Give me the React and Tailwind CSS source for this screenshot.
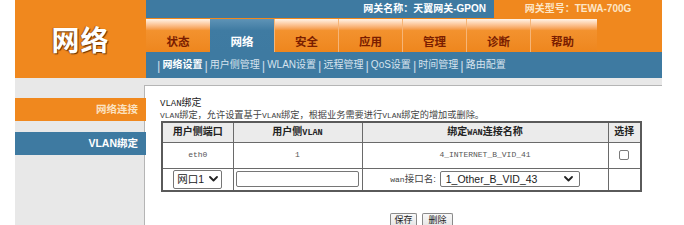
import React from "react";

const SANS = "font-['Liberation_Sans','Noto_Sans_CJK_SC',sans-serif]";
const MONO = "font-['Liberation_Mono','Noto_Sans_CJK_SC',monospace]";

const tabs = ["状态", "网络", "安全", "应用", "管理", "诊断", "帮助"];
const subs = ["网络设置", "用户侧管理", "WLAN设置", "远程管理", "QoS设置", "时间管理", "路由配置"];

function Chevron({ className = "" }) {
  return (
    <svg width="9" height="6" viewBox="0 0 9 6" className={className}>
      <path d="M1 1 L4.5 4.5 L8 1" fill="none" stroke="#222" strokeWidth="1.8" strokeLinecap="round" strokeLinejoin="round" />
    </svg>
  );
}

export default function App() {
  return (
    <div className={`w-[684px] h-[225px] overflow-hidden bg-white ${SANS}`}>
      <div className="ml-[15px] w-[647px]">
        {/* Header */}
        <div className="flex h-[78px]">
          <div className="w-[131px] bg-[#f0881e] flex items-center justify-center pt-[6px]">
            <span className="text-[28px] font-bold text-white leading-none tracking-[1px] [text-shadow:1px_1px_1px_#6b3300,-1px_0_1px_#a45a10]">
              网络
            </span>
          </div>
          <div className="w-[516px] flex flex-col">
            <div className="flex h-[18px]">
              <div className="w-[348px] bg-[#3e7aa1] flex items-center justify-end pr-[8px]">
                <span className="text-[10px] font-bold text-white leading-none">网关名称：天翼网关-GPON</span>
              </div>
              <div className="flex-1 bg-[#f0881e] flex items-center justify-center">
                <span className="text-[10px] font-bold text-[#fde6c6] leading-none">网关型号：TEWA-700G</span>
              </div>
            </div>
            <div className="flex h-[34px] bg-[#f0881e]">
              <div className="flex w-[448px] pt-[1px] bg-[#f0881e]">
                {tabs.map((t, i) =>
                  i === 1 ? (
                    <div
                      key={t}
                      className="w-[64px] bg-linear-to-b from-[#5e93b6] via-[#3f7ba2] via-[35%] to-[#3e7aa1] flex items-center justify-center pt-[14px]"
                    >
                      <span className="text-[11.5px] font-bold text-white leading-none">{t}</span>
                    </div>
                  ) : (
                    <div
                      key={t}
                      className="w-[64px] bg-linear-to-b from-[#fff4e8] via-[#f3922e] via-[35%] to-[#ee861d] flex items-center justify-center pt-[14px] border-l border-[#f6b577] first:border-l-0"
                    >
                      <span className="text-[11.5px] font-bold text-[#7a1d00] leading-none">{t}</span>
                    </div>
                  )
                )}
              </div>
              <div className="w-[3px] bg-linear-to-b from-[#fff4e8] via-[#f3922e] via-[35%] to-[#ee861d] mt-[1px]" />
              <div className="flex-1 bg-[#f0881e]" />
            </div>
            <div className="h-[26px] bg-[#3e7aa1] flex items-center pl-[9px] text-[10px] leading-none">
              {subs.map((s, i) => (
                <React.Fragment key={s}>
                  <span className="text-[#c9dbe8] mx-[2px] text-[13px] leading-none font-light">|</span>
                  <span className={i === 0 ? "text-white font-bold" : "text-[#d6e3ee]"}>{s}</span>
                </React.Fragment>
              ))}
            </div>
          </div>
        </div>

        {/* Body */}
        <div className="flex bg-[#e8e8e8] h-[147px]">
          <div className="w-[129px] pt-[20px] flex flex-col gap-[11px]">
            <div className="w-[131px] h-[23px] bg-[#f0881e] flex items-center justify-end pr-[8px] relative z-10">
              <span className="text-[10.5px] font-bold text-[#fbe2c2] leading-none">网络连接</span>
            </div>
            <div className="w-[131px] h-[23px] bg-[#3e7aa1] flex items-center justify-end pr-[8px] relative z-10">
              <span className="text-[10.5px] font-bold text-white leading-none">VLAN绑定</span>
            </div>
          </div>
          <div className="flex-1 mt-[7px] bg-white border-t border-l border-[#b5b5b5] pl-[15px] pt-[12px] text-[#333]">
            <div className={`text-[10px] leading-[11px] ${MONO} text-[#222]`}>
              <span className="text-[9px]">VLAN</span>绑定
            </div>
            <div className={`text-[9.2px] leading-[11px] ${MONO} text-[#444] whitespace-nowrap`}>
              <span className="text-[8px]">VLAN</span>绑定，允许设置基于<span className="text-[8px]">VLAN</span>绑定，根据业务需要进行<span className="text-[8px]">VLAN</span>绑定的增加或删除。
            </div>
            <table className="ml-[1px] w-[479px] border-collapse border-2 border-[#5a5a5a] table-fixed">
              <colgroup>
                <col className="w-[71px]" />
                <col className="w-[129px]" />
                <col className="w-[246px]" />
                <col className="w-[33px]" />
              </colgroup>
              <thead>
                <tr className="h-[20px] bg-[#ebebeb]">
                  <th className="border border-[#6a6a6a] text-[10px] font-bold text-[#222] p-0 leading-none">用户侧端口</th>
                  <th className="border border-[#6a6a6a] text-[10px] font-bold text-[#222] p-0 leading-none">
                    用户侧<span className={`${MONO} text-[8.5px]`}>VLAN</span>
                  </th>
                  <th className="border border-[#6a6a6a] text-[10px] font-bold text-[#222] p-0 leading-none">
                    绑定<span className={`${MONO} text-[8.5px]`}>WAN</span>连接名称
                  </th>
                  <th className="border border-[#6a6a6a] text-[10px] font-bold text-[#222] p-0 leading-none">选择</th>
                </tr>
              </thead>
              <tbody>
                <tr className="h-[26px]">
                  <td className={`border border-[#6a6a6a] text-center ${MONO} text-[8px] text-[#555] p-0`}>eth0</td>
                  <td className={`border border-[#6a6a6a] text-center ${MONO} text-[8px] text-[#555] p-0`}>1</td>
                  <td className={`border border-[#6a6a6a] text-center ${MONO} text-[8px] text-[#555] p-0`}>4_INTERNET_B_VID_41</td>
                  <td className="border border-[#6a6a6a] p-0">
                    <div className="mx-auto w-[10px] h-[10px] border border-[#7a7a7a] rounded-[2px] bg-white" />
                  </td>
                </tr>
                <tr className="h-[23px]">
                  <td className="border border-[#6a6a6a] p-0">
                    <div className="mx-auto w-[49px] h-[19px] border border-[#767676] rounded-[2px] bg-white flex items-center justify-between px-[3px]">
                      <span className="text-[10.5px] text-[#222] leading-none">网口1</span>
                      <Chevron />
                    </div>
                  </td>
                  <td className="border border-[#6a6a6a] p-0">
                    <div className="mx-auto w-[123px] h-[16px] border border-[#767676] rounded-[2px] bg-white" />
                  </td>
                  <td className="border border-[#6a6a6a] p-0">
                    <div className="flex items-center justify-center gap-[4px]">
                      <span className="text-[9.5px] text-[#444] leading-none">
                        <span className={`${MONO} text-[8px]`}>wan</span>接口名:
                      </span>
                      <div className="w-[140px] h-[16px] border border-[#767676] rounded-[2px] bg-white flex items-center justify-between pl-[5px] pr-[6px]">
                        <span className="text-[10.5px] text-[#222] leading-none">1_Other_B_VID_43</span>
                        <Chevron />
                      </div>
                    </div>
                  </td>
                  <td className="border border-[#6a6a6a] p-0" />
                </tr>
              </tbody>
            </table>
            <div className="flex gap-[5px] ml-[230px] mt-[21px]">
              <div className="w-[27px] h-[13px] border border-b-0 border-[#8a8a8a] rounded-t-[2px] bg-linear-to-b from-[#f8f8f8] to-[#e6e6e6] flex items-start justify-center pt-[1px]">
                <span className="text-[9px] text-[#222] leading-[10px]">保存</span>
              </div>
              <div className="w-[31px] h-[13px] border border-b-0 border-[#8a8a8a] rounded-t-[2px] bg-linear-to-b from-[#f8f8f8] to-[#e6e6e6] flex items-start justify-center pt-[1px]">
                <span className="text-[9px] text-[#222] leading-[10px]">删除</span>
              </div>
            </div>
          </div>
        </div>
      </div>
    </div>
  );
}
